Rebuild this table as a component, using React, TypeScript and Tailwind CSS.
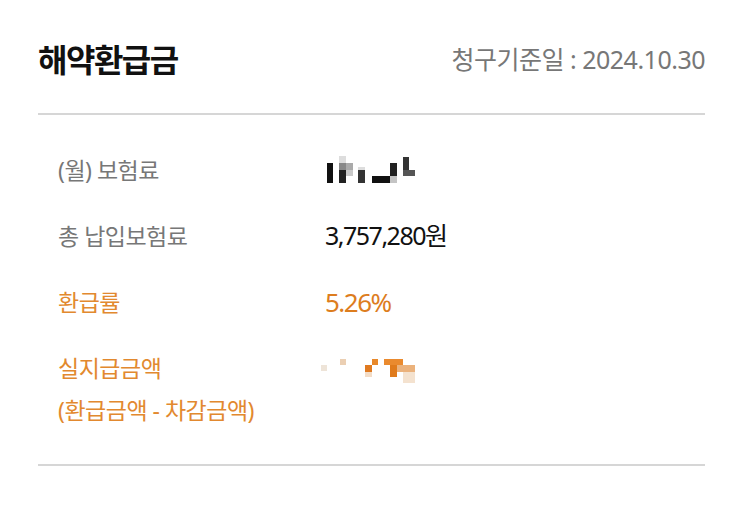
import React from "react";

const font = { fontFamily: '"Noto Sans", "Noto Sans CJK KR", sans-serif' };

// blurred (mosaic) amount values
function Mosaic({ cells }: { cells: [number, number, number, number, string][] }) {
  return (
    <svg width="100" height="30" viewBox="0 0 100 30" className="-ml-[4px] block">
      {cells.map(([x, y, w, h, c], i) => (
        <rect key={i} x={x} y={y} width={w} height={h} fill={c} />
      ))}
    </svg>
  );
}

const premiumCells: [number, number, number, number, string][] = [
  [6, 8, 6, 20, "#111"],
  [18, 1, 7, 7, "#ddd"],
  [18, 8, 7, 7, "#888"],
  [25, 8, 7, 7, "#aaa"],
  [18, 15, 7, 13, "#222"],
  [25, 15, 7, 6, "#c8c8c8"],
  [37, 12, 7, 3, "#ddd"],
  [37, 15, 7, 13, "#333"],
  [51, 21, 20, 7, "#111"],
  [69, 8, 7, 13, "#222"],
  [69, 21, 7, 7, "#c4c4c4"],
  [82, 2, 6, 19, "#333"],
  [82, 15, 12, 6, "#555"],
];

const payoutCells: [number, number, number, number, string][] = [
  [0, 12, 6, 6, "#eee4d8"],
  [19, 6, 6, 6, "#ebcfb3"],
  [51, 6, 6, 6, "#e8882a"],
  [44, 12, 7, 7, "#e07a20"],
  [44, 19, 7, 5, "#f3dcc6"],
  [63, 6, 19, 6, "#ea8a2e"],
  [76, 12, 18, 7, "#ebb27c"],
  [69, 12, 7, 12, "#e07b1c"],
  [82, 19, 12, 11, "#f4e2cf"],
];

export default function App() {
  return (
    <div className="w-[743px] h-[520px] bg-white px-[38px] pt-[30px]" style={font}>
      {/* header */}
      <div className="h-[60px] flex items-center justify-between">
        <h1 className="text-[32px] font-bold tracking-[-1.5px] text-[#111]">해약환급금</h1>
        <span className="text-[25px] tracking-[-0.5px] text-[#777]">청구기준일 : 2024.10.30</span>
      </div>
      <div className="mt-[23px] h-[2px] bg-[#d6d6d6]" />

      {/* rows */}
      <div className="pl-[20px] pt-[22px]">
        <div className="h-[66px] flex items-center">
          <div className="w-[267px] text-[23px] tracking-[-0.5px] text-[#777]">(월) 보험료</div>
          <Mosaic cells={premiumCells} />
        </div>
        <div className="h-[66px] flex items-center">
          <div className="w-[267px] text-[23px] tracking-[-0.5px] text-[#777]">총 납입보험료</div>
          <div className="text-[25px] tracking-[-1.5px] text-[#111]">3,757,280원</div>
        </div>
        <div className="h-[66px] flex items-center">
          <div className="w-[267px] text-[23px] tracking-[-0.5px] text-[#e2892f]">환급률</div>
          <div className="text-[26px] tracking-[-1.5px] text-[#dd7d1e]">5.26%</div>
        </div>
        <div className="pt-[12px] flex items-start">
          <div className="w-[267px] text-[23px] leading-[42px] tracking-[-0.5px] text-[#e2892f]">
            <div>실지급금액</div>
            <div>(환급금액 - 차감금액)</div>
          </div>
          <div className="h-[42px] flex items-center">
            <Mosaic cells={payoutCells} />
          </div>
        </div>
      </div>

      <div className="mt-[33px] h-[2px] bg-[#d6d6d6]" />
    </div>
  );
}
